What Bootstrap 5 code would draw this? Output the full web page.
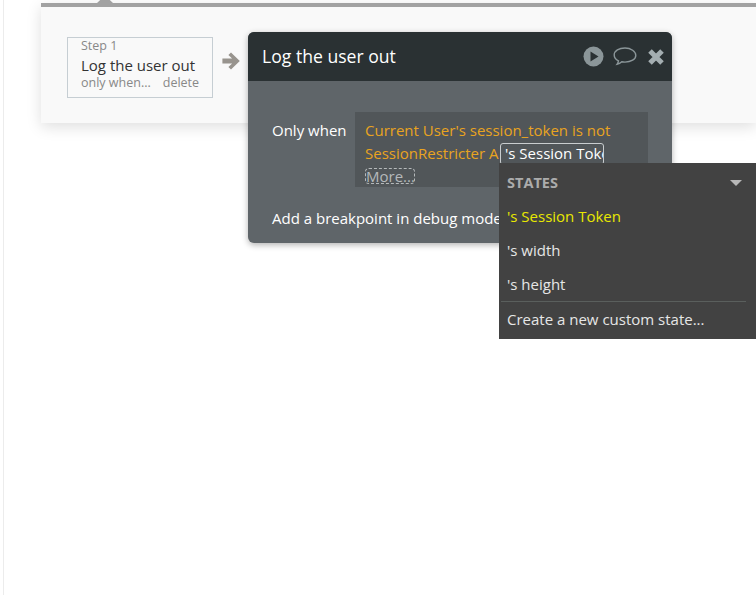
<!DOCTYPE html>
<html lang="en"><head><meta charset="utf-8"><title>Workflow</title>
<link href="https://cdn.jsdelivr.net/npm/bootstrap@5.3.0/dist/css/bootstrap.min.css" rel="stylesheet">
<style>
html,body{height:100%;overflow:hidden;background:#fff}
body{font-family:"Open Sans",sans-serif;font-size:15px;color:#fff;position:relative}
.canvas-edge{position:absolute;left:3px;top:0;bottom:0;width:1px;background:#ececec}
.wf-strip{margin-left:41px;margin-top:3px;height:120px;background:#f9f9f9;border-top:4px solid #a2a2a2;box-shadow:0 4px 14px rgba(0,0,0,.13);position:relative;padding:30px 0 0 26px;gap:9px}
.wf-notch{position:absolute;left:56px;top:-7px;width:16px;height:3px;background:#a2a2a2;clip-path:polygon(20% 0,80% 0,100% 100%,0 100%)}
.step-box{width:146px;height:61px;border:1px solid #c6ced3;padding:0 0 0 13px;color:#888;font-size:12.5px;line-height:16px;flex:none}
.step-name{color:#333;font-size:15px;line-height:23px}
.step-links{gap:12px;margin-top:-2px}
.step-arrow{margin-top:15px;flex:none}
.action-card{width:424px;height:211px;margin-top:-5px;margin-left:-1px;background:#5f6569;border:0;border-radius:6px;box-shadow:0 2px 6px rgba(0,0,0,.3);flex:none;z-index:2;color:#fff}
.action-head{height:49px;background:#2a3133;border-radius:6px 6px 0 0;padding:0 7px 0 14px;font-size:17.6px}
.head-icons{gap:10px}
.bubble-icon{margin-left:-1px}
.action-body{padding:31px 24px 0 24px}
.cond-label{width:83px;padding-top:8px;line-height:20px;flex:none}
.cond-box{width:293px;height:75px;background:#515659;padding:0 0 0 10px;color:#e9a41f;line-height:23px;position:relative}
.cond-line1{padding-top:7px}
.cond-input{position:absolute;left:145px;top:31px;width:104px;height:22px;border:1px solid #c9cdcf;border-radius:3px;background:#515659;color:#fff;padding:0 0 0 4px;line-height:19px;overflow:hidden;white-space:nowrap}
.cond-more{display:block;margin-top:3px;height:16px;line-height:14px;border:1px dashed #b5b9bb;border-radius:4px;color:#b5b9bb;width:50px;white-space:nowrap}
.debug-row{margin-top:21px;line-height:20px;white-space:nowrap}
.states-menu{position:absolute;left:499px;top:163px;width:257px;height:176px;background:#424242;z-index:5}
.states-head{height:36px;padding:4px 13px 0 8px;color:#acacac;font-weight:700;font-size:14.5px}
.caret-down{width:0;height:0;border-left:6px solid transparent;border-right:6px solid transparent;border-top:6px solid #b8b8b8;margin-right:1px}
.menu-row{height:34px;line-height:34px;padding-left:8px;color:#e6e6e6}
.menu-row.is-active{color:#e8e800}
.menu-rule{margin:0 10px 0 2px;height:1px;background:#5a5f5d}
.menu-row.create{height:36px;line-height:35px}
</style></head>
<body>
<div class="canvas-edge"></div>
<div class="wf-strip d-flex align-items-start">
  <div class="wf-notch"></div>
  <div class="step-box">
    <div>Step 1</div>
    <div class="step-name">Log the user out</div>
    <div class="step-links d-flex"><span>only when...</span><span>delete</span></div>
  </div>
  <svg class="step-arrow" width="18" height="18" viewBox="0 0 18 18"><path d="M9 .5 17.800 9 9 17.500l-2.600-2.500 3.700-3.600H.4V6.600h9.700L6.400 3z" fill="#98948e"/></svg>
  <div class="action-card card">
    <div class="action-head d-flex align-items-center justify-content-between">
      <span>Log the user out</span>
      <div class="head-icons d-flex align-items-center">
        <svg width="21" height="21" viewBox="0 0 21 21"><circle cx="10.500" cy="10.500" r="10" fill="#8b9699"/><path d="M7.500 5.500v10l8-5z" fill="#2a3133"/></svg>
        <svg class="bubble-icon" width="24" height="21" viewBox="0 0 24 21"><path d="M12 2C6 2 1.200 4.800 1.200 9c0 2.500 1.700 4.600 4.300 5.900-.2 1.300-.9 2.600-1.500 3.400 1.900-.3 3.700-1.400 4.800-2.500 1 .2 2.100.3 3.200.3 6 0 10.800-2.900 10.800-6.700S18 2 12 2z" fill="none" stroke="#8b9699" stroke-width="1.400"/></svg>
        <svg width="18" height="18" viewBox="0 0 18 18"><path d="M3 3l12 12M15 3 3 15" stroke="#a4aeb1" stroke-width="5"/></svg>
      </div>
    </div>
    <div class="action-body">
      <div class="d-flex">
        <div class="cond-label">Only when</div>
        <div class="cond-box">
          <div class="cond-line1">Current User's session_token is not</div>
          <div class="text-nowrap">SessionRestricter A</div>
          <div class="cond-input">'s Session Token</div>
          <span class="cond-more">More...</span>
        </div>
      </div>
      <div class="debug-row">Add a breakpoint in debug mode</div>
    </div>
  </div>
</div>
<div class="states-menu">
  <div class="states-head d-flex align-items-center justify-content-between"><span>STATES</span><span class="caret-down"></span></div>
  <div class="menu-row is-active">'s Session Token</div>
  <div class="menu-row">'s width</div>
  <div class="menu-row">'s height</div>
  <div class="menu-rule"></div>
  <div class="menu-row create">Create a new custom state...</div>
</div>
<script src="https://cdn.jsdelivr.net/npm/bootstrap@5.3.0/dist/js/bootstrap.bundle.min.js"></script>
</body></html>
